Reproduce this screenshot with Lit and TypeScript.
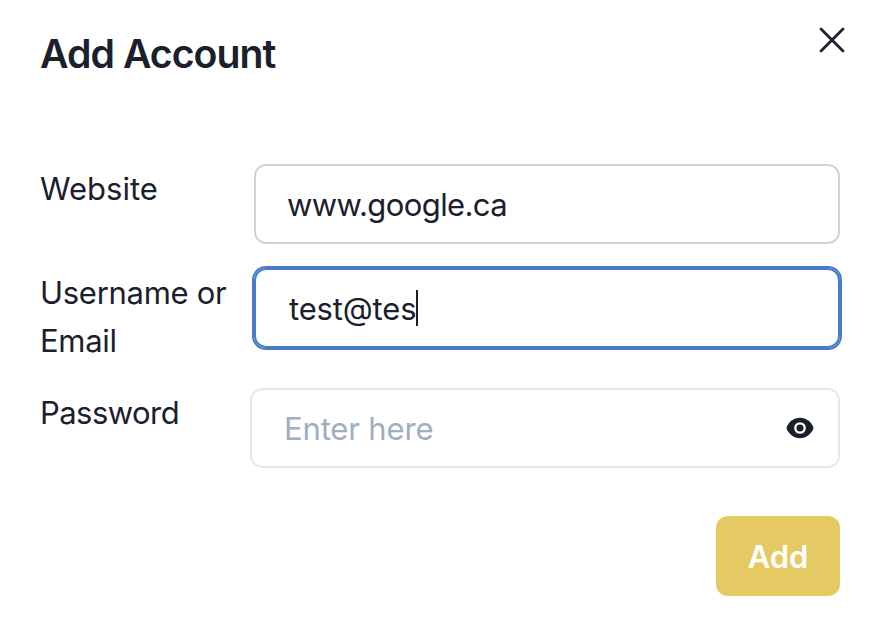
import { LitElement, html, css } from "lit";
import { customElement } from "lit/decorators.js";

@customElement("app-root")
export class AppRoot extends LitElement {
  static styles = css`
    * { box-sizing: border-box; }
    :host {
      display: block;
      height: 622px;
      background: #fff;
      color: #1a202c;
      font: 400 31px/48px Inter, sans-serif;
      overflow: hidden;
    }
    .dialog { padding: 26px 40px; }
    header { display: flex; justify-content: space-between; height: 138px; }
    h2 { margin: 0; font-size: 39.2px; line-height: 56px; font-weight: 600; letter-spacing: -0.95px; white-space: nowrap; }
    .close { width: 28px; height: 28px; margin-right: -6px; }
    .row { display: flex; justify-content: space-between; }
    .label { width: 200px; white-space: nowrap; padding-top: 1px; }
    .field {
      width: 586px; height: 80px; border: 2px solid #cbd5e0; border-radius: 12px;
      padding: 2px 31px 0; display: flex; align-items: center; white-space: nowrap;
    }
    .site { letter-spacing: -0.6px; }
    .email { margin-top: 24px; }
    .email .label { height: 96px; letter-spacing: -0.28px; }
    .email .field { border-color: #467dcb; box-shadow: 0 0 0 2px #467dcb; padding: 2px 33px 0; letter-spacing: -0.15px; }
    .caret { width: 2px; height: 36px; margin-top: -2px; background: #1a202c; }
    .password { margin-top: 24px; }
    .password .label { letter-spacing: -0.55px; }
    .password .field { width: 590px; border-color: #e2e8f0; padding: 0 24px 0 32px; justify-content: space-between; color: #a0aec0; }
    .placeholder { padding-top: 2px; letter-spacing: -0.15px; }
    .eye { width: 28px; height: 28px; }
    footer { display: flex; justify-content: flex-end; margin-top: 48px; }
    .add { width: 124px; height: 80px; padding-top: 2px; border-radius: 12px; background: #e5c963; color: #fff; font-weight: 600; letter-spacing: -0.1px; display: grid; place-items: center; }
  `;
  render() {
    return html`<div class="dialog">
      <header><h2>Add Account</h2>
        <svg class="close" viewBox="0 0 28 28" fill="none" stroke="#1a202c" stroke-width="2.8" stroke-linecap="round"><path d="M3 3 25 25M25 3 3 25"/></svg>
      </header>
      <div class="row"><div class="label">Website</div><div class="field site">www.google.ca</div></div>
      <div class="row email"><div class="label">Username or<br>Email</div><div class="field"><span>test@tes</span><span class="caret"></span></div></div>
      <div class="row password"><div class="label">Password</div><div class="field"><span class="placeholder">Enter here</span>
        <svg class="eye" viewBox="0 0 28 28"><path fill="#1a202c" d="M14 3.800C7.500 3.800 2.500 8 .4 14c2.100 6 7.100 10.200 13.600 10.200s11.500-4.200 13.600-10.200C25.500 8 20.500 3.800 14 3.800Z"/><circle cx="14" cy="14" r="4.700" fill="#1a202c" stroke="#fff" stroke-width="2.300"/></svg></div></div>
      <footer><div class="add">Add</div></footer>
    </div>`;
  }
}
